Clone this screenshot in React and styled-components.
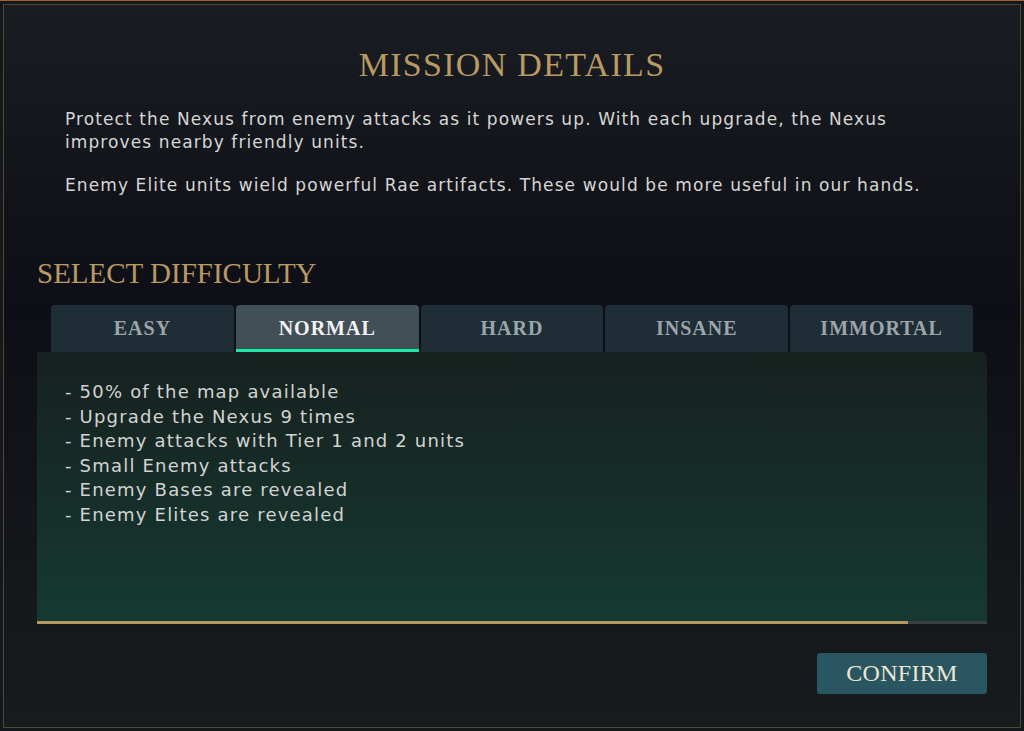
import React, { useState } from "react";
import styled, { createGlobalStyle } from "styled-components";

const Global = createGlobalStyle`
  html, body { margin: 0; padding: 0; background: #14120f; }
  * { box-sizing: border-box; }
`;

const Frame = styled.div`
  width: 1024px;
  height: 731px;
  padding: 3px;
  background: #15171a;
  border-top: 1px solid #9a6434;
  display: flex;
`;

const Panel = styled.div`
  flex: 1;
  border: 1px solid #4b4a3c;
  background: linear-gradient(180deg, #191d22 0%, #12141a 25%, #0e0f16 42%, #121419 65%, #181b1e 100%);
  display: flex;
  flex-direction: column;
  padding: 38px 33px 0 33px;
`;

const Title = styled.h1`
  margin: 0;
  text-align: center;
  font-family: "Liberation Serif", serif;
  font-weight: 400;
  font-size: 34px;
  letter-spacing: 1.3px;
  color: #b99a63;
  line-height: 44px;
`;

const Description = styled.div`
  padding: 21px 0 0 28px;
  width: 900px;
  display: flex;
  flex-direction: column;
  gap: 20px;
`;

const Paragraph = styled.p`
  margin: 0;
  font-family: "DejaVu Sans", sans-serif;
  font-size: 17px;
  letter-spacing: 1.1px;
  line-height: 23px;
  color: #d6d6d6;
`;

const SectionTitle = styled.h2`
  margin: 58px 0 0 0;
  font-family: "Liberation Serif", serif;
  font-weight: 400;
  font-size: 29px;
  letter-spacing: 0px;
  color: #b99a63;
  line-height: 36px;
`;

const Tabs = styled.div`
  display: flex;
  gap: 2px;
  margin: 14px 14px 0 14px;
`;

const Tab = styled.button`
  flex: 1;
  height: 47px;
  border: none;
  border-radius: 4px 4px 0 0;
  background: ${(p) => (p.$active ? "#414f57" : "#1f2e36")};
  color: ${(p) => (p.$active ? "#f2f2f2" : "#9ca5aa")};
  font-family: "Liberation Serif", serif;
  font-weight: 700;
  font-size: 20px;
  letter-spacing: 1px;
  padding: 0;
  box-shadow: ${(p) => (p.$active ? "inset 0 -3px 0 #1de9a6" : "none")};
  cursor: pointer;
`;

const Content = styled.div`
  height: 272px;
  border-radius: 0 6px 0 0;
  background: linear-gradient(180deg, #17211f 0%, #162c27 45%, #153a31 100%);
  display: flex;
  flex-direction: column;
`;

const List = styled.ul`
  list-style: none;
  margin: 0;
  padding: 28px 28px 0 28px;
  flex: 1;
`;

const Item = styled.li`
  font-family: "DejaVu Sans", sans-serif;
  font-size: 18px;
  letter-spacing: 1.2px;
  line-height: 24.6px;
  color: #d3d3d3;
`;

const Progress = styled.div`
  height: 3px;
  background: #3a3f44;
  display: flex;
`;

const ProgressFill = styled.div`
  height: 100%;
  background: #b39760;
`;

const Footer = styled.div`
  display: flex;
  justify-content: flex-end;
  padding-top: 29px;
`;

const Confirm = styled.button`
  width: 170px;
  height: 41px;
  border: none;
  border-radius: 3px;
  background: #2a5661;
  color: #ece6d6;
  font-family: "Liberation Serif", serif;
  font-size: 24px;
  letter-spacing: 0.3px;
  padding: 0;
  cursor: pointer;
`;

const difficulties = ["EASY", "NORMAL", "HARD", "INSANE", "IMMORTAL"];
const details = [
  "- 50% of the map available",
  "- Upgrade the Nexus 9 times",
  "- Enemy attacks with Tier 1 and 2 units",
  "- Small Enemy attacks",
  "- Enemy Bases are revealed",
  "- Enemy Elites are revealed",
];

export default function App() {
  const [active, setActive] = useState(1);
  return (
    <>
      <Global />
      <Frame>
        <Panel>
          <Title>MISSION DETAILS</Title>
          <Description>
            <Paragraph>
              Protect the Nexus from enemy attacks as it powers up. With each upgrade, the Nexus improves nearby friendly units.
            </Paragraph>
            <Paragraph>
              Enemy Elite units wield powerful Rae artifacts. These would be more useful in our hands.
            </Paragraph>
          </Description>
          <SectionTitle>SELECT DIFFICULTY</SectionTitle>
          <Tabs>
            {difficulties.map((d, i) => (
              <Tab key={d} $active={i === active} onClick={() => setActive(i)}>
                {d}
              </Tab>
            ))}
          </Tabs>
          <Content>
            <List>
              {details.map((t) => (
                <Item key={t}>{t}</Item>
              ))}
            </List>
            <Progress>
              <ProgressFill style={{ width: `${(871 / 950) * 100}%` }} />
            </Progress>
          </Content>
          <Footer>
            <Confirm>CONFIRM</Confirm>
          </Footer>
        </Panel>
      </Frame>
    </>
  );
}
